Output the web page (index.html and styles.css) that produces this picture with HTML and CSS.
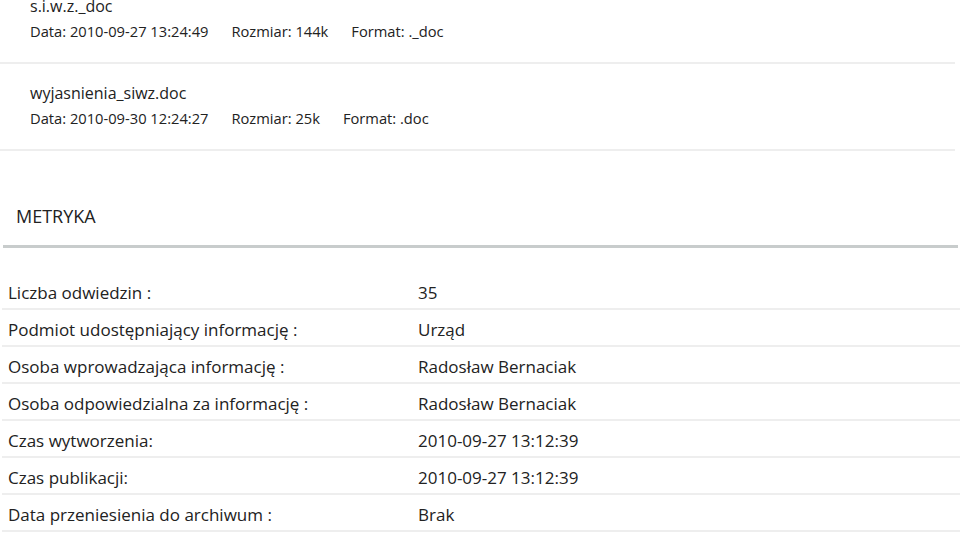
FILE: index.html
```html
<!DOCTYPE html>
<html lang="pl">
<head>
<meta charset="utf-8">
<title>Metryka</title>
<link rel="stylesheet" href="styles.css">
</head>
<body>
<div class="page">
  <ul class="files">
    <li class="file">
      <div class="file-name">s.i.w.z._doc</div>
      <div class="file-meta"><span>Data: 2010-09-27 13:24:49</span><span>Rozmiar: 144k</span><span>Format: ._doc</span></div>
    </li>
    <li class="file">
      <div class="file-name">wyjasnienia_siwz.doc</div>
      <div class="file-meta"><span>Data: 2010-09-30 12:24:27</span><span>Rozmiar: 25k</span><span>Format: .doc</span></div>
    </li>
  </ul>
  <section class="metryka">
    <h2 class="metryka-title">METRYKA</h2>
    <div class="metryka-table">
      <div class="row"><div class="label">Liczba odwiedzin :</div><div class="value">35</div></div>
      <div class="row"><div class="label">Podmiot udostępniający informację :</div><div class="value">Urząd</div></div>
      <div class="row"><div class="label">Osoba wprowadzająca informację :</div><div class="value">Radosław Bernaciak</div></div>
      <div class="row"><div class="label">Osoba odpowiedzialna za informację :</div><div class="value">Radosław Bernaciak</div></div>
      <div class="row"><div class="label">Czas wytworzenia:</div><div class="value">2010-09-27 13:12:39</div></div>
      <div class="row"><div class="label">Czas publikacji:</div><div class="value">2010-09-27 13:12:39</div></div>
      <div class="row"><div class="label">Data przeniesienia do archiwum :</div><div class="value">Brak</div></div>
    </div>
  </section>
</div>
</body>
</html>
```
FILE: styles.css
```css
html, body {
  margin: 0;
  padding: 0;
  background: #ffffff;
}
body {
  font-family: "Open Sans", "Noto Sans", sans-serif;
  color: #222222;
  overflow: hidden;
  width: 960px;
  height: 533px;
}
.page {
  margin-top: -23px;
}
.files {
  list-style: none;
  margin: 0 5px 0 0;
  padding: 0;
}
.file {
  padding: 18px 30px 20px;
  border-bottom: 2px solid #eeeeee;
}
.file-name {
  font-size: 16px;
  line-height: 22px;
}
.file-meta {
  display: flex;
  gap: 23px;
  margin-top: 3px;
  font-size: 14.7px;
  line-height: 22px;
}
.metryka-title {
  margin: 0 2px 0 3px;
  padding: 53px 13px 17px;
  font-size: 18px;
  font-weight: 400;
  line-height: 24px;
  border-bottom: 3px solid #c8cccc;
}
.metryka-table {
  margin-top: 25px;
  padding-left: 2px;
}
.row {
  display: grid;
  grid-template-columns: 410px 1fr;
  padding: 8px 0 3px 6px;
  font-size: 17px;
  line-height: 24px;
  border-bottom: 2px solid #eeeeee;
}
```
